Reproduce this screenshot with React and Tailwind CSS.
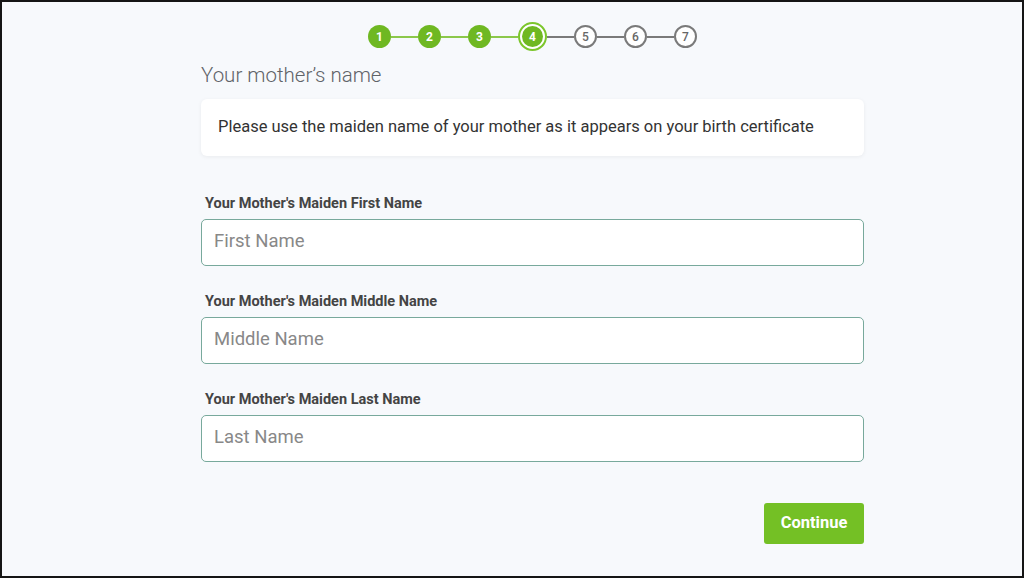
import React from "react";

const steps = [1, 2, 3, 4, 5, 6, 7];
const current = 4;

const fields = [
  { label: "Your Mother's Maiden First Name", placeholder: "First Name" },
  { label: "Your Mother's Maiden Middle Name", placeholder: "Middle Name" },
  { label: "Your Mother's Maiden Last Name", placeholder: "Last Name" },
];

const Step = ({ n }) => {
  if (n < current) {
    return (
      <div className="w-[23px] h-[23px] rounded-full bg-[#6fb822] flex items-center justify-center text-white text-[12px] font-bold">
        {n}
      </div>
    );
  }
  if (n === current) {
    return (
      <div className="w-[29px] h-[29px] rounded-full border-2 border-[#7cc62c] bg-white p-[2px]">
        <div className="w-full h-full rounded-full bg-[#6fb822] flex items-center justify-center text-white text-[12px] font-bold">
          {n}
        </div>
      </div>
    );
  }
  return (
    <div className="w-[23px] h-[23px] rounded-full border-2 border-[#7a7a7a] bg-white flex items-center justify-center text-[#666] text-[12px] font-medium">
      {n}
    </div>
  );
};

const App = () => {
  return (
    <div
      className="w-[1024px] h-[578px] border-2 border-[#151515] bg-[#f7f9fc] overflow-hidden"
      style={{ fontFamily: "Roboto, 'Liberation Sans', sans-serif" }}
    >
      <div className="ml-[199px] w-[663px] pt-[20px]">
        {/* Stepper */}
        <div className="flex items-center justify-center">
          {steps.map((n, i) => (
            <React.Fragment key={n}>
              <Step n={n} />
              {i < steps.length - 1 && (
                <div
                  className={
                    n < current
                      ? "w-[27px] h-[2px] bg-[#8cc84b]"
                      : "w-[27px] h-[2px] bg-[#7a7a7a]"
                  }
                />
              )}
            </React.Fragment>
          ))}
        </div>

        {/* Title */}
        <h1 className="mt-[12px] text-[20.5px] leading-[25px] font-light text-[#5f6368]">
          Your mother’s name
        </h1>

        {/* Info card */}
        <div className="mt-[11px] h-[57px] bg-white rounded-md shadow-[0_1px_4px_rgba(0,0,0,0.06)] flex items-center px-[17px]">
          <p className="text-[16.5px] text-[#333]">
            Please use the maiden name of your mother as it appears on your birth certificate
          </p>
        </div>

        {/* Fields */}
        <div className="mt-[39px] flex flex-col gap-[27px]">
          {fields.map((f) => (
            <div key={f.label}>
              <label className="block pl-[4px] text-[14.5px] leading-[17px] font-bold text-[#444]">
                {f.label}
              </label>
              <input
                type="text"
                placeholder={f.placeholder}
                className="mt-[7px] w-full h-[47px] rounded-[5px] border-[1.5px] border-[#78a99c] bg-white px-[12px] pb-[3px] text-[18.5px] text-[#333] placeholder-[#888] outline-none"
              />
            </div>
          ))}
        </div>

        {/* Continue */}
        <div className="mt-[41px] flex justify-end">
          <button className="w-[100px] h-[41px] rounded-[3px] bg-[#74c025] text-white text-[16.5px] font-bold">
            Continue
          </button>
        </div>
      </div>
    </div>
  );
};

export default App;
